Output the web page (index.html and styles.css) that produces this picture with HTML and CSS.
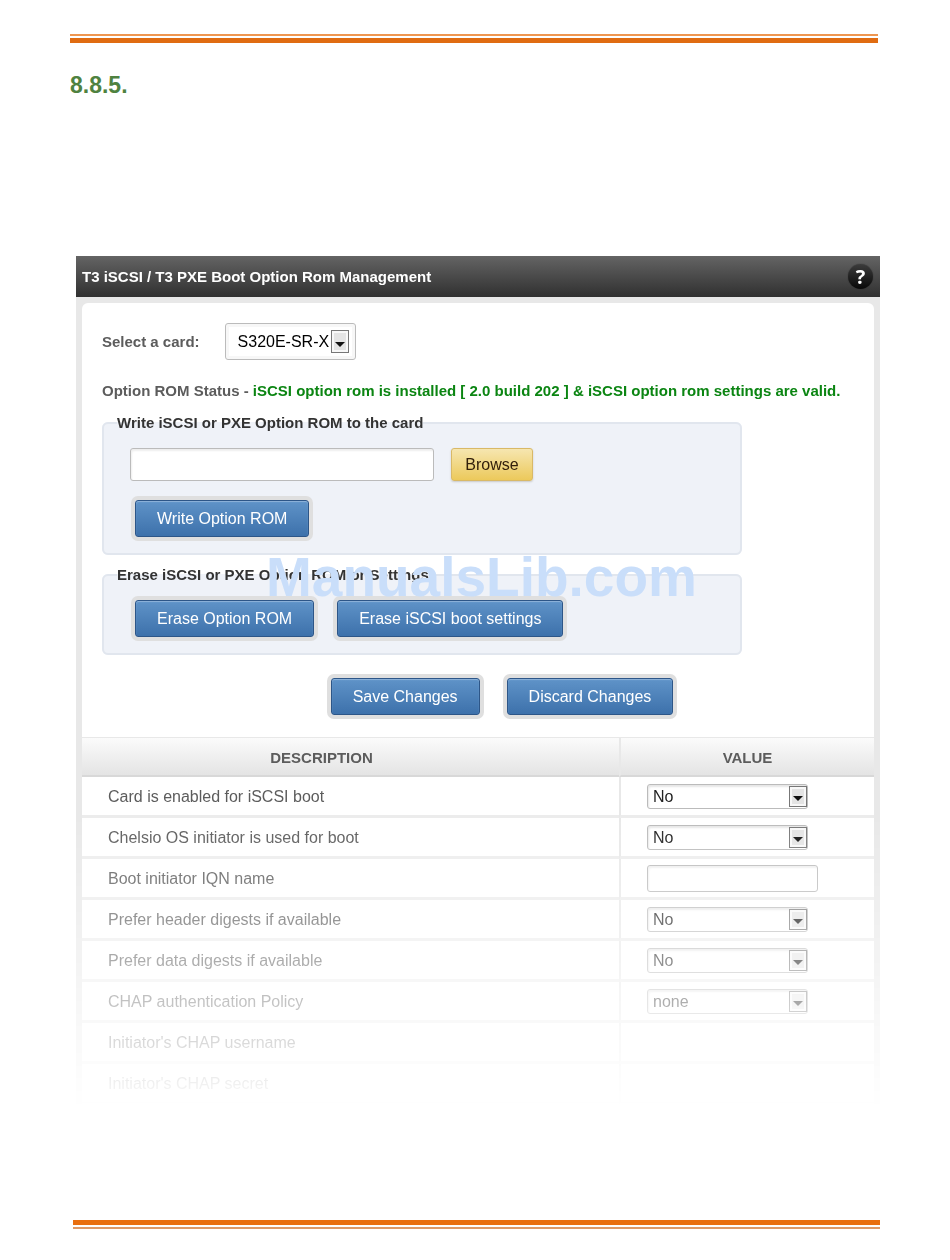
FILE: index.html
```html
<!DOCTYPE html>
<html lang="en">
<head>
  <meta charset="UTF-8">
  <meta name="viewport" content="width=device-width, initial-scale=1.0">
  <title>T3 iSCSI / T3 PXE Boot Option Rom Management</title>
  <link rel="stylesheet" href="styles.css">
</head>
<body>

  <div class="page">
    <div class="rule rule-top"></div>
    <h1>8.8.5.</h1>

    <div class="panel">
      <div class="panel-header">
        <h2>T3 iSCSI / T3 PXE Boot Option Rom Management</h2>
        <button type="button" class="help" aria-label="Help">?</button>
      </div>

      <div class="panel-body">
        <form class="options">
          <div class="card-row">
            <label for="card">Select a card:</label>
            <span class="select select-card">
              <select id="card">
                <option>S320E-SR-X</option>
              </select>
            </span>
          </div>

          <p class="status">Option ROM Status - <span>iSCSI option rom is installed [ 2.0 build 202 ] &amp; iSCSI option rom settings are valid.</span></p>

          <fieldset>
            <legend>Write iSCSI or PXE Option ROM to the card</legend>
            <div class="file-row">
              <input type="text" id="romFile" aria-label="Option ROM file">
              <button type="button" class="browse">Browse</button>
            </div>
            <div class="button-row">
              <button type="button" class="btn">Write Option ROM</button>
            </div>
          </fieldset>

          <fieldset>
            <legend>Erase iSCSI or PXE Option ROM or Settings</legend>
            <div class="button-row">
              <button type="button" class="btn">Erase Option ROM</button>
              <button type="button" class="btn">Erase iSCSI boot settings</button>
            </div>
          </fieldset>

          <div class="actions">
            <button type="button" class="btn">Save Changes</button>
            <button type="button" class="btn">Discard Changes</button>
          </div>
        </form>

        <table>
          <thead>
            <tr>
              <th class="description">DESCRIPTION</th>
              <th class="value">VALUE</th>
            </tr>
          </thead>
          <tbody>
            <tr>
              <td><label for="bootEnabled">Card is enabled for iSCSI boot</label></td>
              <td><span class="select"><select id="bootEnabled"><option>No</option><option>Yes</option></select></span></td>
            </tr>
            <tr>
              <td><label for="osInitiator">Chelsio OS initiator is used for boot</label></td>
              <td><span class="select"><select id="osInitiator"><option>No</option><option>Yes</option></select></span></td>
            </tr>
            <tr>
              <td><label for="iqnName">Boot initiator IQN name</label></td>
              <td><input type="text" id="iqnName"></td>
            </tr>
            <tr>
              <td><label for="headerDigests">Prefer header digests if available</label></td>
              <td><span class="select"><select id="headerDigests"><option>No</option><option>Yes</option></select></span></td>
            </tr>
            <tr>
              <td><label for="dataDigests">Prefer data digests if available</label></td>
              <td><span class="select"><select id="dataDigests"><option>No</option><option>Yes</option></select></span></td>
            </tr>
            <tr>
              <td><label for="chapPolicy">CHAP authentication Policy</label></td>
              <td><span class="select"><select id="chapPolicy"><option>none</option></select></span></td>
            </tr>
            <tr>
              <td>Initiator's CHAP username</td>
              <td></td>
            </tr>
            <tr>
              <td>Initiator's CHAP secret</td>
              <td></td>
            </tr>
          </tbody>
        </table>
      </div>

      <div class="watermark">ManualsLib.com</div>
    </div>

    <div class="rule rule-bottom"></div>
  </div>

</body>
</html>
```

FILE: styles.css
```css
*,
*::before,
*::after {
  box-sizing: border-box;
}

body {
  margin: 0;
  background-color: #ffffff;
  color: #5c5c5c;
  font-family: "Liberation Sans", Arial, sans-serif;
  font-size: 16px;
  line-height: 20px;
}

.page {
  padding: 34px 70px 30px;
}

/* double orange rules at the top and bottom of the page */
.rule {
  height: 9px;
}

.rule-top {
  margin-right: 2px;
  border-top: 2px solid #ee9650;
  border-bottom: 5px solid #e06c12;
}

.rule-bottom {
  margin: 110px 0 0 3px;
  border-top: 5px solid #e96f0f;
  border-bottom: 2px solid #de9a68;
}

h1 {
  margin: 27px 0 0;
  color: #4f8240;
  font-size: 23px;
  line-height: 30px;
}

/* the panel fades out towards its lower edge */
.panel {
  position: relative;
  margin: 156px 0 0 6px;
  background-color: #e8e8e8;
  -webkit-mask-image: linear-gradient(#000 560px, transparent 100%);
  mask-image: linear-gradient(#000 560px, transparent 100%);
}

.panel-header {
  display: flex;
  align-items: center;
  justify-content: space-between;
  height: 41px;
  padding: 0 7px 0 6px;
  background: linear-gradient(#646464, #303030);
}

h2 {
  margin: 0;
  color: #ffffff;
  font-size: 15px;
}

.help {
  width: 25px;
  height: 25px;
  padding: 0;
  border: none;
  border-radius: 50%;
  background: linear-gradient(#3c3c3c, #080808);
  box-shadow: 0 0 1px #222222;
  color: #ffffff;
  font: bold 20px/24px "Open Sans", sans-serif;
  cursor: pointer;
}

.panel-body {
  margin: 0 6px;
  padding-bottom: 5px;
  border-top: 6px solid #e8e8e8;
}

.options {
  padding: 20px 20px 22px;
  border-radius: 6px 6px 0 0;
  background-color: #ffffff;
}

.card-row {
  display: flex;
  align-items: center;
  gap: 25px;
}

.card-row label,
.status,
legend {
  font-size: 15px;
  font-weight: bold;
}

.status {
  margin: 21px 0 12px;
}

.status span {
  color: #0b8512;
}

fieldset {
  max-width: 640px;
  min-width: 0;
  margin: 0 0 10px;
  padding: 15px 26px 16px;
  border: 2px solid #e1e6ee;
  border-radius: 6px;
  background-color: #eff2f8;
}

legend {
  margin-left: -13px;
  padding: 0;
  color: #333333;
}

input {
  border: 1px solid #bbbbbb;
  border-radius: 3px;
  background-color: #ffffff;
  box-shadow: inset 1px 2px 2px #eeeeee;
  font: inherit;
}

.file-row {
  display: flex;
  gap: 17px;
  margin-bottom: 19px;
}

.file-row input {
  width: 304px;
  height: 33px;
}

.browse {
  width: 82px;
  height: 33px;
  padding: 0;
  border: 1px solid #d9b967;
  border-radius: 3px;
  background: linear-gradient(#f6e6b0, #ecc95b);
  box-shadow: 0 1px 2px #c8c8c8;
  color: #33200c;
  font: inherit;
  cursor: pointer;
}

.button-row,
.actions {
  display: flex;
  gap: 23px;
}

.button-row {
  padding-left: 5px;
}

.actions {
  justify-content: center;
  gap: 27px;
  margin-top: 23px;
  padding-left: 48px;
}

.btn {
  height: 37px;
  padding: 0 21px;
  border: 1px solid #2d5688;
  border-radius: 3px;
  background: linear-gradient(#5f93c8, #3d71ab);
  box-shadow: inset 0 1px 1px #8fb4da, 0 0 0 4px #dfdfdf;
  color: #ffffff;
  font: inherit;
  cursor: pointer;
}

/* drop-downs with a small boxed arrow */
.select {
  position: relative;
  display: inline-block;
  width: 161px;
  vertical-align: top;
}

.select select {
  display: block;
  width: 100%;
  height: 25px;
  padding: 1px 24px 0 5px;
  border: 1px solid #bbbbbb;
  border-radius: 3px;
  background: #ffffff;
  box-shadow: inset 1px 2px 2px #e6e6e6;
  color: #222222;
  font: inherit;
  -webkit-appearance: none;
  appearance: none;
}

.select::before {
  content: "";
  position: absolute;
  top: 2px;
  right: 1px;
  bottom: 2px;
  width: 18px;
  border: 1px solid #777777;
  background-color: #e4e4e4;
  box-shadow: inset 0 0 0 2px #f8f8f8;
  pointer-events: none;
}

.select::after {
  content: "";
  position: absolute;
  top: 50%;
  right: 5px;
  border: 5px solid transparent;
  border-top-color: #111111;
  border-bottom-width: 0;
  pointer-events: none;
}

.select-card {
  width: 131px;
}

.select-card select {
  height: 37px;
  padding: 0 24px 0 12px;
  box-shadow: inset 0 0 0 3px #f7f7f7;
  color: #000000;
}

.select-card::before {
  top: 7px;
  right: 7px;
  bottom: 7px;
}

.select-card::after {
  right: 11px;
}

table {
  width: 100%;
  table-layout: fixed;
  border-collapse: separate;
  border-spacing: 0;
  background-color: #ffffff;
}

th {
  height: 40px;
  padding: 3px 0 0;
  border-top: 1px solid #e8e8e8;
  border-bottom: 2px solid #d8d8d8;
  background: linear-gradient(#fbfbfb, #e4e4e4);
  color: #5c5c5c;
  font-size: 15px;
}

th.description {
  padding-right: 58px;
}

th.value {
  width: 255px;
}

th + th,
td + td {
  border-left: 2px solid #e8e8e8;
}

td {
  height: 41px;
  padding: 0 0 0 26px;
  border-bottom: 3px solid #ececec;
}

td:first-child {
  padding-top: 2px;
}

td input {
  display: block;
  width: 171px;
  height: 27px;
}

.watermark {
  position: absolute;
  top: 291px;
  left: 190px;
  color: #c9defa;
  font-size: 55px;
  font-weight: bold;
  line-height: 60px;
  pointer-events: none;
}
```
